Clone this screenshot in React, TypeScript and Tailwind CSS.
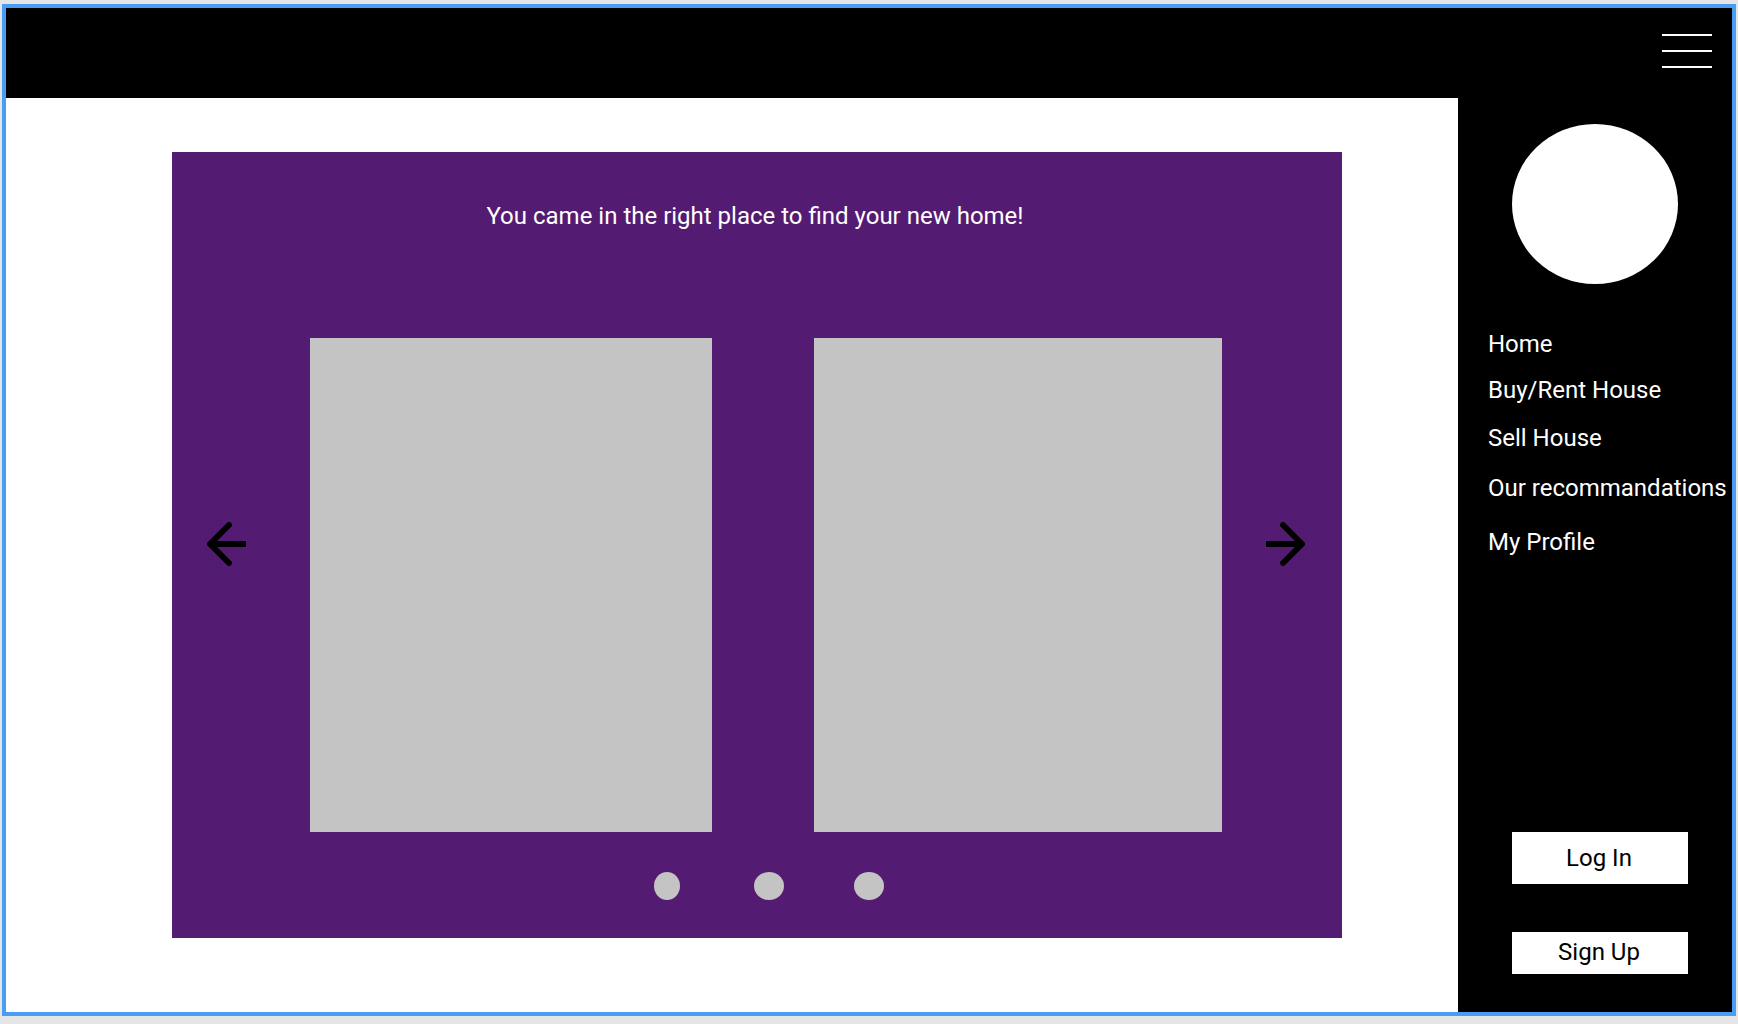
const links = [
  { label: 'Home', space: 'mt-0' },
  { label: 'Buy/Rent House', space: 'mt-[18px]' },
  { label: 'Sell House', space: 'mt-5' },
  { label: 'Our recommandations', space: 'mt-[22px]' },
  { label: 'My Profile', space: 'mt-[26px]' },
];

function Arrow({ direction }: { direction: 'left' | 'right' }) {
  return (
    <svg width="39" height="44" viewBox="0 0 39 44" fill="none" stroke="#000" strokeWidth="6" strokeLinejoin="round" aria-hidden="true">
      {direction === 'left' ? (
        <>
          <path d="M22 3L3 22L22 41" strokeLinecap="round" />
          <path d="M3 22H39" />
        </>
      ) : (
        <>
          <path d="M17 3L36 22L17 41" strokeLinecap="round" />
          <path d="M36 22H0" />
        </>
      )}
    </svg>
  );
}

function Carousel() {
  return (
    <section className="mt-[54px] mr-[116px] mb-[74px] ml-[166px] flex min-w-0 flex-1 flex-col bg-[#541b72] pt-[50px] pb-[38px]">
      <h1 className="pr-1 text-center text-white">You came in the right place to find your new home!</h1>
      <div className="mt-[108px] flex flex-1 items-stretch pr-[37px] pl-[35px]">
        <button type="button" aria-label="Previous" className="mt-[184px] shrink-0 self-start">
          <Arrow direction="left" />
        </button>
        <div className="mr-11 ml-16 grid min-h-64 flex-1 grid-cols-[402fr_408fr] gap-[102px]">
          <article className="bg-[#c4c4c4]" />
          <article className="bg-[#c4c4c4]" />
        </div>
        <button type="button" aria-label="Next" className="mt-[184px] shrink-0 self-start">
          <Arrow direction="right" />
        </button>
      </div>
      <div className="mt-10 flex justify-center pl-6">
        <button type="button" aria-label="Slide 1" className="h-7 w-[26px] rounded-[50%] bg-[#c4c4c4]" />
        <button type="button" aria-label="Slide 2" className="ml-[74px] h-7 w-[30px] rounded-[50%] bg-[#c4c4c4]" />
        <button type="button" aria-label="Slide 3" className="ml-[70px] h-7 w-[30px] rounded-[50%] bg-[#c4c4c4]" />
      </div>
    </section>
  );
}

function Sidebar() {
  return (
    <aside className="flex w-[274px] shrink-0 flex-col bg-black pt-[26px] pb-[38px]">
      <div className="ml-[54px] h-40 w-[166px] rounded-[50%] bg-white" />
      <nav className="mt-[46px] flex flex-col items-start pl-[30px] text-white">
        {links.map((link) => (
          <a key={link.label} href="#" className={`whitespace-nowrap ${link.space}`}>
            {link.label}
          </a>
        ))}
      </nav>
      <div className="mt-auto flex flex-col gap-12 pr-11 pl-[54px] pt-12">
        <button type="button" className="h-[52px] bg-white pr-0.5 text-black">Log In</button>
        <button type="button" className="h-[42px] bg-white pr-0.5 pb-0.5 text-black">Sign Up</button>
      </div>
    </aside>
  );
}

export default function App() {
  return (
    <div className="flex min-h-screen flex-col bg-[#e5e5e5] px-0.5 pt-1 pb-2 font-[Roboto,sans-serif] text-[24px] leading-7">
      <div className="flex flex-1 flex-col border-4 border-[#489ef5] bg-white">
        <header className="flex h-[90px] shrink-0 items-start justify-end bg-black pt-[26px] pr-5">
          <button type="button" aria-label="Menu" className="flex w-[50px] flex-col gap-3.5">
            <span className="h-0.5 w-full bg-white" />
            <span className="h-0.5 w-full bg-white" />
            <span className="h-0.5 w-full bg-white" />
          </button>
        </header>
        <div className="flex flex-1">
          <main className="flex min-w-0 flex-1">
            <Carousel />
          </main>
          <Sidebar />
        </div>
      </div>
    </div>
  );
}
